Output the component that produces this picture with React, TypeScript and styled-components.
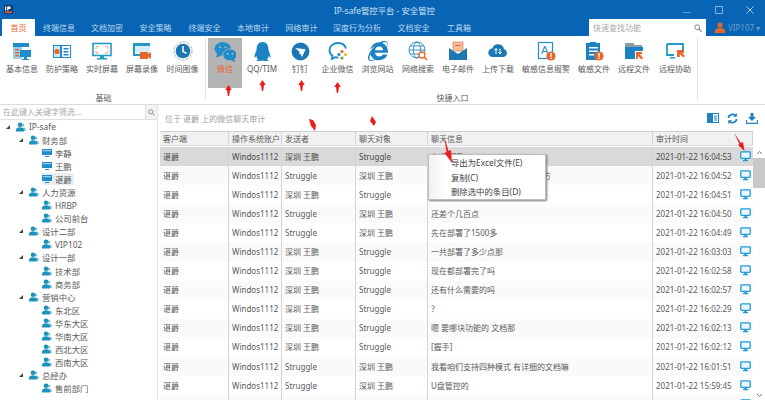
import React, { FC, ReactNode } from 'react';
import styled, { createGlobalStyle } from 'styled-components';
import { FaInternetExplorer, FaQq } from 'react-icons/fa';

const Colors = {
    blue: '#0864b4',
    icon: '#1f8ccb',
    teal: '#1b93bb',
    orange: '#e8662a',
    text: '#5a5a5a',
    line: '#d4d4d4',
    red: '#ee1c1c',
};

const GlobalStyle = createGlobalStyle`
    html, body {
        margin: 0;
        padding: 0;
        background: #fff;
    }
    body {
        width: 765px;
        height: 400px;
        overflow: hidden;
        font-family: "Noto Sans", "Noto Sans CJK SC", sans-serif;
        font-size: 8px;
        color: ${Colors.text};
    }
`;

const Page = styled.div`
    position: relative;
    display: flex;
    flex-direction: column;
    width: 765px;
    height: 400px;
    overflow: hidden;
`;

/* ---- title bar and tabs ---- */

const Header = styled.header`
    display: flex;
    flex-direction: column;
    height: 36px;
    background: ${Colors.blue};
    flex: none;
`;

const TitleRow = styled.div`
    display: grid;
    grid-template-columns: 1fr auto 1fr;
    align-items: center;
    height: 19px;
    padding-left: 4px;
    color: #cfe2f3;
    font-size: 8.4px;
`;

const WindowButtons = styled.div`
    display: flex;
    justify-content: flex-end;
    align-items: center;
    gap: 23.5px;
    padding-right: 11px;
`;

const TabRow = styled.div`
    display: flex;
    align-items: stretch;
    height: 17px;
    padding-left: 2px;
`;

const Tab = styled.div<{ $width: number; $active?: boolean }>`
    display: flex;
    align-items: center;
    justify-content: center;
    width: ${p => p.$width}px;
    border-radius: 1px 1px 0 0;
    white-space: nowrap;
    background: ${p => (p.$active ? '#fff' : 'transparent')};
    color: ${p => (p.$active ? Colors.orange : '#bcd8ee')};
`;

const QuickSearch = styled.div`
    display: flex;
    align-items: center;
    justify-content: space-between;
    width: 117px;
    margin-left: 110px;
    padding: 0 4px;
    box-sizing: border-box;
    background: #fff;
    color: #a9a9a9;
`;

const UserBox = styled.div`
    display: flex;
    align-items: center;
    gap: 3px;
    margin-left: 9px;
    color: #6f9fc8;
`;

/* ---- ribbon ---- */

const Ribbon = styled.section`
    display: flex;
    flex: none;
    height: 68px;
    border-bottom: 1px solid #dcdcdc;
    box-sizing: content-box;
`;

const RibbonGroup = styled.div<{ $width: number; $pad: number }>`
    display: flex;
    flex-direction: column;
    width: ${p => p.$width}px;
    padding-left: ${p => p.$pad}px;
    box-sizing: border-box;
    margin-top: 2px;
    margin-bottom: 4px;
    border-right: 1px solid #e2e2e2;
`;

const RibbonItems = styled.div`
    display: flex;
    height: 50px;
`;

const RibbonItem = styled.div<{ $width: number; $active?: boolean }>`
    display: flex;
    flex-direction: column;
    align-items: center;
    width: ${p => p.$width}px;
    height: 50px;
    padding-top: 3px;
    box-sizing: border-box;
    white-space: nowrap;
    background: ${p => (p.$active ? '#b4b4b4' : 'transparent')};
    color: ${p => (p.$active ? Colors.orange : Colors.text)};
`;

const IconSlot = styled.div`
    display: flex;
    align-items: center;
    justify-content: center;
    width: 22px;
    height: 20px;
    margin-bottom: 1px;
`;

const ItemLabel = styled.span`
    line-height: 13px;
`;

const GroupLabel = styled.div`
    margin-top: 4px;
    text-align: center;
`;

/* ---- main area ---- */

const Main = styled.main`
    display: flex;
    flex: 1;
    gap: 2px;
    min-height: 0;
`;

const LeftPanel = styled.aside`
    display: flex;
    flex-direction: column;
    flex: none;
    width: 158px;
    border-right: 1px solid #e4e4e4;
    box-sizing: border-box;
`;

const FilterBar = styled.div`
    display: flex;
    height: 14px;
    flex: none;
    border-bottom: 1px solid #e0e0e0;
    color: #a8a8a8;
`;

const FilterInput = styled.div`
    flex: 1;
    padding-left: 3px;
    line-height: 14px;
`;

const FilterButton = styled.div`
    display: flex;
    align-items: center;
    justify-content: center;
    width: 11px;
    background: #f3f3f3;
    border-left: 1px solid #dcdcdc;
`;

const Tree = styled.div`
    font-size: 8.4px;
`;

const TreeRow = styled.div<{ $level: number }>`
    display: flex;
    align-items: center;
    height: 13.1px;
    padding-left: ${p => 6 + p.$level * 13}px;
`;

const Caret = styled.span<{ $hidden: boolean }>`
    width: 0;
    height: 0;
    margin-right: 6px;
    border-style: solid;
    border-width: 0 0 4px 4px;
    border-color: transparent transparent ${p => (p.$hidden ? 'transparent' : '#444')} transparent;
`;

const TreeNode = styled.span<{ $selected?: boolean }>`
    display: flex;
    align-items: center;
    gap: 3px;
    padding-right: 2px;
    background: ${p => (p.$selected ? '#e9eef2' : 'transparent')};
`;

const RightPanel = styled.section`
    display: flex;
    flex-direction: column;
    flex: 1;
    min-width: 0;
`;

const Toolbar = styled.div`
    display: flex;
    align-items: center;
    justify-content: space-between;
    height: 26px;
    flex: none;
    padding: 0 7px 0 5px;
    color: #a0a0a0;
`;

const ToolIcons = styled.div`
    display: flex;
    align-items: center;
    gap: 8px;
`;

const TableArea = styled.div`
    display: flex;
    flex: 1;
    min-height: 0;
`;

const Table = styled.div`
    width: 593px;
    flex: none;
`;

const HeaderRow = styled.div`
    display: grid;
    grid-template-columns: 69px 53px 74px 72px 225px 100px;
    height: 15px;
    margin-bottom: 1px;
    background: #f1f1f1;
    border-top: 1px solid #cfcfcf;
    border-bottom: 1px solid #dedede;
    box-sizing: border-box;
`;

const HeaderCell = styled.div`
    padding-left: 3px;
    line-height: 13px;
    white-space: nowrap;
    border-right: 1px solid ${Colors.line};
`;

const Row = styled.div<{ $odd: boolean; $selected: boolean }>`
    display: grid;
    grid-template-columns: 69px 53px 74px 72px 225px 100px;
    height: 19.1px;
    background: ${p => (p.$selected ? '#d9d9d9' : p.$odd ? '#fafafa' : '#fff')};
    color: ${p => (p.$selected ? '#4a4a4a' : Colors.text)};
`;

const Cell = styled.div`
    display: flex;
    align-items: center;
    padding: 0 0 1px 3px;
    white-space: nowrap;
    overflow: hidden;
    border-right: 1px solid ${Colors.line};
`;

const TimeCell = styled(Cell)`
    justify-content: space-between;
    padding: 0 2px 1px 3px;
    border-right: none;
`;

const ScrollBar = styled.div`
    display: flex;
    flex-direction: column;
    align-items: center;
    justify-content: space-between;
    width: 12px;
    padding: 19px 0 2px;
    box-sizing: border-box;
    color: #777;
`;

const ScrollThumb = styled.div`
    width: 100%;
    height: 30px;
    margin-top: 3px;
    background: #c9c9c9;
`;

const ScrollTrack = styled.div`
    flex: 1;
    width: 100%;
`;

/* ---- things lying over the page ---- */

const ContextMenu = styled.ul`
    position: absolute;
    left: 428px;
    top: 154px;
    width: 118px;
    height: 46px;
    margin: 0;
    padding: 1px 0 0 22px;
    box-sizing: border-box;
    list-style: none;
    background: linear-gradient(90deg, #f0f0f0 0, #fff 17px);
    border: 1px solid #bdbdbd;
    box-shadow: 1px 1px 2px #777;
    font-size: 8.4px;
    color: #444;
`;

const MenuItem = styled.li`
    height: 14.5px;
    line-height: 14.5px;
    white-space: nowrap;
`;

const Marker = styled.svg<{ $x: number; $y: number }>`
    position: absolute;
    left: ${p => p.$x}px;
    top: ${p => p.$y}px;
    overflow: visible;
`;

/* ---- icons ---- */

const Svg: FC<{ size?: number; children: ReactNode }> = ({ size = 20, children }) => (
    <svg width={size} height={size} viewBox="0 0 20 20">{children}</svg>
);

const InfoIcon = () => (
    <Svg>
        <path d="M1 2h16v4H1z" fill="#1f8ccb" />
        <path d="M1 6h9v12H1z" fill="#9fd0ea" />
        <path d="M3 8h4v1.5H3zM3 11h4v1.5H3zM3 14h4v1.5H3z" fill="#e8662a" />
        <path d="M8 9h11v7H8z" fill="#1f8ccb" />
        <path d="M12 16h3v2h2v1H10v-1h2z" fill="#1f8ccb" />
    </Svg>
);

const GuardIcon = () => (
    <Svg>
        <path d="M1 4h18v13H1z" fill="#1f8ccb" />
        <path d="M2 5h6v11H2z" fill="#cfe8f6" />
        <circle cx="5" cy="10.5" r="2.6" fill="#e8662a" />
        <path d="M10 5h8v11h-8z" fill="#fff" />
        <path d="M11.5 7h5v1.4h-5zM11.5 10h5v1.4h-5zM11.5 13h5v1.4h-5z" fill="#1f8ccb" />
    </Svg>
);

const ScreenIcon = () => (
    <Svg>
        <rect x="1" y="2.5" width="18" height="12" fill="#fff" stroke="#1f9bc4" strokeWidth="1.6" />
        <path d="M4 8V5.5h3M13 5.5h3V8M16 9.5V12h-3M7 12H4V9.5" fill="none" stroke="#e8a27a" strokeWidth="1" />
        <path d="M8 15h4v2h3v1.4H5V17h3z" fill="#1f9bc4" />
    </Svg>
);

const RecordIcon = () => (
    <Svg>
        <path d="M1 2h17v3H1z" fill="#1f9bc4" />
        <path d="M1 5h2v10H1zM3 13h6v2H3z" fill="#1f9bc4" />
        <path d="M3 5h15v7H3z" fill="#d7edf7" />
        <path d="M8 11h8v7H8z" fill="#e8662a" />
        <path d="M16 13l3-2v7l-3-2z" fill="#e8662a" />
    </Svg>
);

const ClockIcon = () => (
    <Svg>
        <circle cx="10" cy="10" r="9" fill="none" stroke="#9fb6c6" strokeWidth="1" strokeDasharray="3 1.2" />
        <circle cx="10" cy="10" r="7.3" fill="#1c78b4" />
        <path d="M10 5v5.6l3.6 1.8" fill="none" stroke="#fff" strokeWidth="1.5" />
    </Svg>
);

const WechatIcon = () => (
    <Svg size={22}>
        <ellipse cx="8" cy="8" rx="7.5" ry="6.2" fill="#1f8ccb" />
        <path d="M3 12l-1 4 5-2z" fill="#1f8ccb" />
        <ellipse cx="14.5" cy="13.5" rx="6.5" ry="5.4" fill="#1f8ccb" stroke="#b4b4b4" strokeWidth="0.8" />
        <path d="M18 17l1.5 3-4-1.6z" fill="#1f8ccb" />
        <circle cx="5.5" cy="6.6" r="1" fill="#b4b4b4" />
        <circle cx="10.5" cy="6.6" r="1" fill="#b4b4b4" />
        <circle cx="12.4" cy="12.4" r="0.9" fill="#b4b4b4" />
        <circle cx="16.8" cy="12.4" r="0.9" fill="#b4b4b4" />
    </Svg>
);

const DingIcon = () => (
    <Svg size={19}>
        <circle cx="10" cy="10" r="9.4" fill="#1c78b4" />
        <path d="M4.5 6.2l10.8 1.3-3.7 8.2-1.8-3.3-1.6.4 1-2.2z" fill="#fff" />
    </Svg>
);

const WorkChatIcon = () => (
    <Svg>
        <path d="M10 2C5 2 1.5 5.2 1.5 9.2c0 2.3 1.2 4.3 3 5.7L4 17.8l3.2-1.6c1 .3 2 .4 3 .3" fill="none" stroke="#1f8ccb" strokeWidth="1.9" />
        <path d="M10 2c4 0 7.2 2.3 8 5.4" fill="none" stroke="#1f8ccb" strokeWidth="1.9" />
        <circle cx="14" cy="10.5" r="1.6" fill="#e8662a" />
        <circle cx="17.5" cy="13.5" r="1.6" fill="#f2b632" />
        <circle cx="14" cy="17" r="1.6" fill="#5bb04a" />
        <circle cx="11" cy="13.5" r="1.6" fill="#1f8ccb" />
    </Svg>
);

const GlobeIcon = () => (
    <Svg>
        <g fill="none" stroke="#2a89bf" strokeWidth="0.9">
            <circle cx="9" cy="9" r="8" />
            <ellipse cx="9" cy="9" rx="3.6" ry="8" />
            <path d="M1 9h16M2.2 5h13.6M2.2 13h10" />
        </g>
        <circle cx="14" cy="14" r="3" fill="#fff" stroke="#e8662a" strokeWidth="1.3" />
        <path d="M16 16l3 3" stroke="#e8662a" strokeWidth="1.6" />
    </Svg>
);

const MailIcon = () => (
    <Svg>
        <path d="M5 1h10v9H5z" fill="#f2c1a4" stroke="#e8662a" strokeWidth="0.6" />
        <path d="M7 4h6v1H7z" fill="#e8662a" />
        <path d="M1 7l9 6 9-6v12H1z" fill="#1c78b4" />
    </Svg>
);

const CloudIcon = () => (
    <Svg>
        <path d="M5 16a4.4 4.4 0 0 1-.6-8.8A6 6 0 0 1 16 8.2 4 4 0 0 1 15.500 16z" fill="#1c78b4" />
        <path d="M8 13V7.500M8 7.500L6.400 9.300M8 7.500l1.600 1.800M12 7.500V13M12 13l-1.600-1.800M12 13l1.600-1.800" fill="none" stroke="#fff" strokeWidth="1" />
    </Svg>
);

const AlertDot: FC = () => (
    <g>
        <circle cx="15" cy="15" r="4.6" fill="#e8662a" />
        <path d="M14.300 12h1.400v4h-1.400zM14.300 16.800h1.400v1.300h-1.400z" fill="#fff" />
    </g>
);

const AlertInfoIcon = () => (
    <Svg>
        <rect x="2.500" y="1.500" width="14" height="16" fill="#fff" stroke="#1f8ccb" strokeWidth="1.200" />
        <text x="5" y="13" fontSize="11" fill="#1f8ccb" fontFamily="Liberation Sans, sans-serif">A</text>
        <AlertDot />
    </Svg>
);

const AlertFileIcon = () => (
    <Svg>
        <path d="M2 2h4V1h6v1h4v17H2z" fill="#1c82c4" />
        <path d="M5 6h9v1.500H5zM5 9.500h9V11H5zM5 13h5v1.500H5z" fill="#fff" />
        <AlertDot />
    </Svg>
);

const RemoteFileIcon = () => (
    <Svg>
        <path d="M1 2h8l2 2h7v3H1z" fill="#8d9aa6" />
        <path d="M1 6h18v12H1z" fill="#1c82c4" />
        <path d="M11 10h8v9h-8z" fill="#fff" />
        <path d="M12 11h6v2.200h-2.200L19 17l-1.500 1.500-3.500-3.400V18h-2z" fill="#e8662a" />
    </Svg>
);

const RemoteHelpIcon = () => (
    <Svg>
        <path d="M2 3h16v9M2 3v11h7" fill="none" stroke="#1f9bc4" strokeWidth="1.800" />
        <path d="M5 16h5v1.500H5z" fill="#1f9bc4" />
        <path d="M12 9h7v2.200h-2.500L20 15l-1.600 1.500-3.600-3.400V16H12z" fill="#e8662a" />
    </Svg>
);

const PersonIcon = () => (
    <svg width="10" height="10" viewBox="0 0 10 10">
        <circle cx="6.800" cy="3" r="1.500" fill="#7fc0d8" />
        <path d="M7 5.500c1.500 0 2.800.7 2.800 2V9H7z" fill="#7fc0d8" />
        <circle cx="4" cy="2.800" r="2.300" fill={Colors.teal} />
        <path d="M0 9.500V8c0-1.800 1.800-2.800 4-2.800S8 6.200 8 8v1.500z" fill={Colors.teal} />
    </svg>
);

const PcIcon = () => (
    <svg width="10" height="10" viewBox="0 0 10 10">
        <path d="M0 1h10v6H0z" fill="#1f8ccb" />
        <path d="M1 2h8v1.200H1z" fill="#9fd0ea" />
        <path d="M3 8h4v1H3z" fill="#1f8ccb" />
    </svg>
);

const MonitorIcon = () => (
    <svg width="11" height="11" viewBox="0 0 11 11" style={{ flex: 'none' }}>
        <rect x="0.800" y="0.800" width="9.400" height="6.600" rx="0.800" fill="#eaf6fc" stroke="#1f9ad6" strokeWidth="1.300" />
        <path d="M4.300 7.500h2.400V9h1.300v1.200H3V9h1.300z" fill="#1f9ad6" />
    </svg>
);

const ChevronIcon: FC<{ up?: boolean }> = ({ up }) => (
    <svg width="7" height="5" viewBox="0 0 7 5">
        <path d={up ? 'M1 4l2.500-2.500L6 4' : 'M1 1l2.500 2.500L6 1'} fill="none" stroke="#777" strokeWidth="1" />
    </svg>
);

const SearchGlyph: FC<{ size: number; color: string }> = ({ size, color }) => (
    <svg width={size} height={size} viewBox="0 0 10 10">
        <circle cx="4" cy="4" r="3" fill="none" stroke={color} strokeWidth="1.100" />
        <path d="M6.300 6.300L9.500 9.500" stroke={color} strokeWidth="1.400" />
    </svg>
);

/* ---- data ---- */

type RibbonEntry = { label: string; width: number; icon: ReactNode; active?: boolean };

const basicItems: RibbonEntry[] = [
    { label: '基本信息', width: 40, icon: <InfoIcon /> },
    { label: '防护策略', width: 40, icon: <GuardIcon /> },
    { label: '实时屏幕', width: 40, icon: <ScreenIcon /> },
    { label: '屏幕录像', width: 40, icon: <RecordIcon /> },
    { label: '时间图像', width: 41, icon: <ClockIcon /> },
];

const quickItems: RibbonEntry[] = [
    { label: '微信', width: 34, icon: <WechatIcon />, active: true },
    { label: 'QQ/TIM', width: 40, icon: <FaQq size={19} color="#1c82c4" /> },
    { label: '钉钉', width: 36, icon: <DingIcon /> },
    { label: '企业微信', width: 39, icon: <WorkChatIcon /> },
    { label: '浏览网站', width: 41, icon: <FaInternetExplorer size={20} color="#1c82c4" /> },
    { label: '网络搜索', width: 40, icon: <GlobeIcon /> },
    { label: '电子邮件', width: 40, icon: <MailIcon /> },
    { label: '上传下载', width: 40, icon: <CloudIcon /> },
    { label: '敏感信息报警', width: 56, icon: <AlertInfoIcon /> },
    { label: '敏感文件', width: 40, icon: <AlertFileIcon /> },
    { label: '远程文件', width: 40, icon: <RemoteFileIcon /> },
    { label: '远程协助', width: 42, icon: <RemoteHelpIcon /> },
];

const tabs: [string, number][] = [
    ['首页', 33], ['终端信息', 48], ['文档加密', 48], ['安全策略', 49], ['终端安全', 49],
    ['本地审计', 48], ['网络审计', 49], ['深度行为分析', 62], ['文档安全', 51], ['工具箱', 40],
];

type TreeEntry = { label: string; level: number; kind: 'group' | 'person' | 'pc'; selected?: boolean };

const treeItems: TreeEntry[] = [
    { label: 'IP-safe', level: 0, kind: 'group' },
    { label: '财务部', level: 1, kind: 'group' },
    { label: '李静', level: 2, kind: 'pc' },
    { label: '王鹏', level: 2, kind: 'pc' },
    { label: '谌爵', level: 2, kind: 'pc', selected: true },
    { label: '人力资源', level: 1, kind: 'group' },
    { label: 'HRBP', level: 2, kind: 'person' },
    { label: '公司前台', level: 2, kind: 'person' },
    { label: '设计二部', level: 1, kind: 'group' },
    { label: 'VIP102', level: 2, kind: 'person' },
    { label: '设计一部', level: 1, kind: 'group' },
    { label: '技术部', level: 2, kind: 'person' },
    { label: '商务部', level: 2, kind: 'person' },
    { label: '营销中心', level: 1, kind: 'group' },
    { label: '东北区', level: 2, kind: 'person' },
    { label: '华东大区', level: 2, kind: 'person' },
    { label: '华南大区', level: 2, kind: 'person' },
    { label: '西北大区', level: 2, kind: 'person' },
    { label: '西南大区', level: 2, kind: 'person' },
    { label: '总经办', level: 1, kind: 'group' },
    { label: '售前部门', level: 2, kind: 'person' },
];

const WANG = '深圳 王鹏';
const STRUGGLE = 'Struggle';

const messages: [string, string, string, string][] = [
    [WANG, STRUGGLE, '在吗 王鹏', '2021-01-22 16:04:53'],
    [STRUGGLE, WANG, '您好，请问有什么可以帮您的地方', '2021-01-22 16:04:52'],
    [WANG, STRUGGLE, '点数不够了', '2021-01-22 16:04:51'],
    [STRUGGLE, WANG, '还差个几百点', '2021-01-22 16:04:50'],
    [STRUGGLE, WANG, '先在部署了1500多', '2021-01-22 16:04:49'],
    [WANG, STRUGGLE, '一共部署了多少点那', '2021-01-22 16:03:03'],
    [WANG, STRUGGLE, '现在都部署完了吗', '2021-01-22 16:02:58'],
    [WANG, STRUGGLE, '还有什么需要的吗', '2021-01-22 16:02:57'],
    [WANG, STRUGGLE, ' ？', '2021-01-22 16:02:29'],
    [WANG, STRUGGLE, '嗯 要哪块功能的  文档那', '2021-01-22 16:02:13'],
    [WANG, STRUGGLE, '[握手]', '2021-01-22 16:02:12'],
    [STRUGGLE, WANG, '我看咱们支持四种模式 有详细的文档嘛', '2021-01-22 16:01:51'],
    [STRUGGLE, WANG, 'U盘管控的', '2021-01-22 15:59:45'],
];

const smallArrows: [number, number][] = [[225, 85], [259, 80], [298, 80], [334, 82]];

const SmallArrow: FC<{ x: number; y: number }> = ({ x, y }) => (
    <Marker $x={x} $y={y} width="7" height="11" viewBox="0 0 6 10">
        <path d="M3 0L6 4.500H4.400L3.600 10H2.400L1.600 4.500H0z" fill={Colors.red} />
    </Marker>
);

export default function App() {
    return (
        <Page>
            <GlobalStyle />
            <Header>
                <TitleRow>
                    <svg width="9" height="9" viewBox="0 0 9 9">
                        <rect width="9" height="9" fill="#17386b" />
                        <path d="M1 1.500h1.200v4H1zM3.200 1.500H6.500v2.400H4.400v1.600H3.200z" fill="#fff" />
                        <path d="M1 6.500h7v1.500H1z" fill="#e8662a" />
                    </svg>
                    <span>IP-safe管控平台 - 安全管控</span>
                    <WindowButtons>
                        <svg width="8" height="8" viewBox="0 0 8 8"><path d="M0 6h8v1H0z" fill="#5f9fd4" /></svg>
                        <svg width="8" height="8" viewBox="0 0 8 8"><rect x="0.500" y="0.500" width="7" height="7" fill="none" stroke="#7fb2dc" /></svg>
                        <svg width="8" height="8" viewBox="0 0 8 8"><path d="M0.500 0.500l7 7M7.500 0.500l-7 7" stroke="#a9cbe8" /></svg>
                    </WindowButtons>
                </TitleRow>
                <TabRow>
                    {tabs.map(([label, width], i) => (
                        <Tab key={label} $width={width} $active={i === 0}>{label}</Tab>
                    ))}
                    <QuickSearch>
                        <span>快速查找功能</span>
                        <SearchGlyph size={8} color="#777" />
                    </QuickSearch>
                    <UserBox>
                        <svg width="10" height="12" viewBox="0 0 10 12">
                            <circle cx="5" cy="3" r="2.600" fill={Colors.orange} />
                            <path d="M0 11V8.500C0 7 2 6 5 6s5 1 5 2.500V11z" fill={Colors.orange} />
                        </svg>
                        <span>VIP107 ▾</span>
                    </UserBox>
                </TabRow>
            </Header>

            <Ribbon>
                <RibbonGroup $width={206} $pad={2}>
                    <RibbonItems>
                        {basicItems.map(item => (
                            <RibbonItem key={item.label} $width={item.width}>
                                <IconSlot>{item.icon}</IconSlot>
                                <ItemLabel>{item.label}</ItemLabel>
                            </RibbonItem>
                        ))}
                    </RibbonItems>
                    <GroupLabel>基础</GroupLabel>
                </RibbonGroup>
                <RibbonGroup $width={492} $pad={2}>
                    <RibbonItems>
                        {quickItems.map(item => (
                            <RibbonItem key={item.label} $width={item.width} $active={item.active}>
                                <IconSlot>{item.icon}</IconSlot>
                                <ItemLabel>{item.label}</ItemLabel>
                            </RibbonItem>
                        ))}
                    </RibbonItems>
                    <GroupLabel>快捷入口</GroupLabel>
                </RibbonGroup>
            </Ribbon>

            <Main>
                <LeftPanel>
                    <FilterBar>
                        <FilterInput>在此键入关键字筛选...</FilterInput>
                        <FilterButton><SearchGlyph size={7} color="#777" /></FilterButton>
                    </FilterBar>
                    <Tree>
                        {treeItems.map(node => (
                            <TreeRow key={node.label} $level={node.level}>
                                <Caret $hidden={node.kind !== 'group'} />
                                <TreeNode $selected={node.selected}>
                                    {node.kind === 'pc' ? <PcIcon /> : <PersonIcon />}
                                    <span>{node.label}</span>
                                </TreeNode>
                            </TreeRow>
                        ))}
                    </Tree>
                </LeftPanel>

                <RightPanel>
                    <Toolbar>
                        <span>位于 谌爵 上的微信聊天审计</span>
                        <ToolIcons>
                            <svg width="12" height="10" viewBox="0 0 12 10">
                                <path d="M0 0h12v10H0z" fill="#1c82c4" />
                                <path d="M6 1h5v8H6z" fill="#fff" />
                                <path d="M7 2.500h3v1H7zM7 4.500h3v1H7zM7 6.500h3v1H7z" fill="#1c82c4" />
                            </svg>
                            <svg width="11" height="11" viewBox="0 0 11 11">
                                <path d="M1.500 5a4 4 0 0 1 7-2.300M9.500 6a4 4 0 0 1-7 2.300" fill="none" stroke="#1c82c4" strokeWidth="1.800" />
                                <path d="M9.800 0v3.800H6zM1.200 11V7.200H5z" fill="#1c82c4" />
                            </svg>
                            <svg width="12" height="11" viewBox="0 0 12 11">
                                <path d="M4.500 0h3v4H10L6 8 2 4h2.500z" fill="#1c82c4" />
                                <path d="M0.500 7v3.300h11V7" fill="none" stroke="#1c82c4" strokeWidth="1.200" />
                            </svg>
                        </ToolIcons>
                    </Toolbar>
                    <TableArea>
                        <Table>
                            <HeaderRow>
                                <HeaderCell>客户端</HeaderCell>
                                <HeaderCell>操作系统账户</HeaderCell>
                                <HeaderCell>发送者</HeaderCell>
                                <HeaderCell>聊天对象</HeaderCell>
                                <HeaderCell>聊天信息</HeaderCell>
                                <HeaderCell>审计时间</HeaderCell>
                            </HeaderRow>
                            {messages.map(([sender, target, text, time], i) => (
                                <Row key={time} $odd={i % 2 === 1} $selected={i === 0}>
                                    <Cell>谌爵</Cell>
                                    <Cell>Windos1112</Cell>
                                    <Cell>{sender}</Cell>
                                    <Cell>{target}</Cell>
                                    <Cell>{text}</Cell>
                                    <TimeCell>
                                        <span>{time}</span>
                                        <MonitorIcon />
                                    </TimeCell>
                                </Row>
                            ))}
                            <Row $odd={true} $selected={false}>
                                <Cell />
                                <Cell />
                                <Cell />
                                <Cell />
                                <Cell />
                                <TimeCell>
                                    <span />
                                    <MonitorIcon />
                                </TimeCell>
                            </Row>
                        </Table>
                        <ScrollBar>
                            <ChevronIcon up />
                            <ScrollThumb />
                            <ScrollTrack />
                            <ChevronIcon />
                        </ScrollBar>
                    </TableArea>
                </RightPanel>
            </Main>

            <ContextMenu>
                <MenuItem>导出为Excel文件(E)</MenuItem>
                <MenuItem>复制(C)</MenuItem>
                <MenuItem>删除选中的条目(D)</MenuItem>
            </ContextMenu>

            {smallArrows.map(([x, y]) => (
                <SmallArrow key={x} x={x} y={y} />
            ))}
            <Marker $x={309} $y={119} width="7" height="12" viewBox="0 0 7 12">
                <path d="M0 0L4 1 7 6 6 12 2 7z" fill={Colors.red} />
            </Marker>
            <Marker $x={370} $y={116} width="6" height="10" viewBox="0 0 6 10">
                <path d="M2 0L6 6 4 10 0 5z" fill={Colors.red} />
            </Marker>
            <Marker $x={442} $y={136} width="11" height="27" viewBox="0 0 11 27">
                <path d="M2 0L6.500 15 9 14 10 27 2.500 17 4.500 16z" fill={Colors.red} />
            </Marker>
            <Marker $x={734} $y={133} width="11" height="18" viewBox="0 0 11 18">
                <path d="M0 0L7 10 9 9 10.500 18 4 12 5.500 11z" fill={Colors.red} />
            </Marker>
        </Page>
    );
}
